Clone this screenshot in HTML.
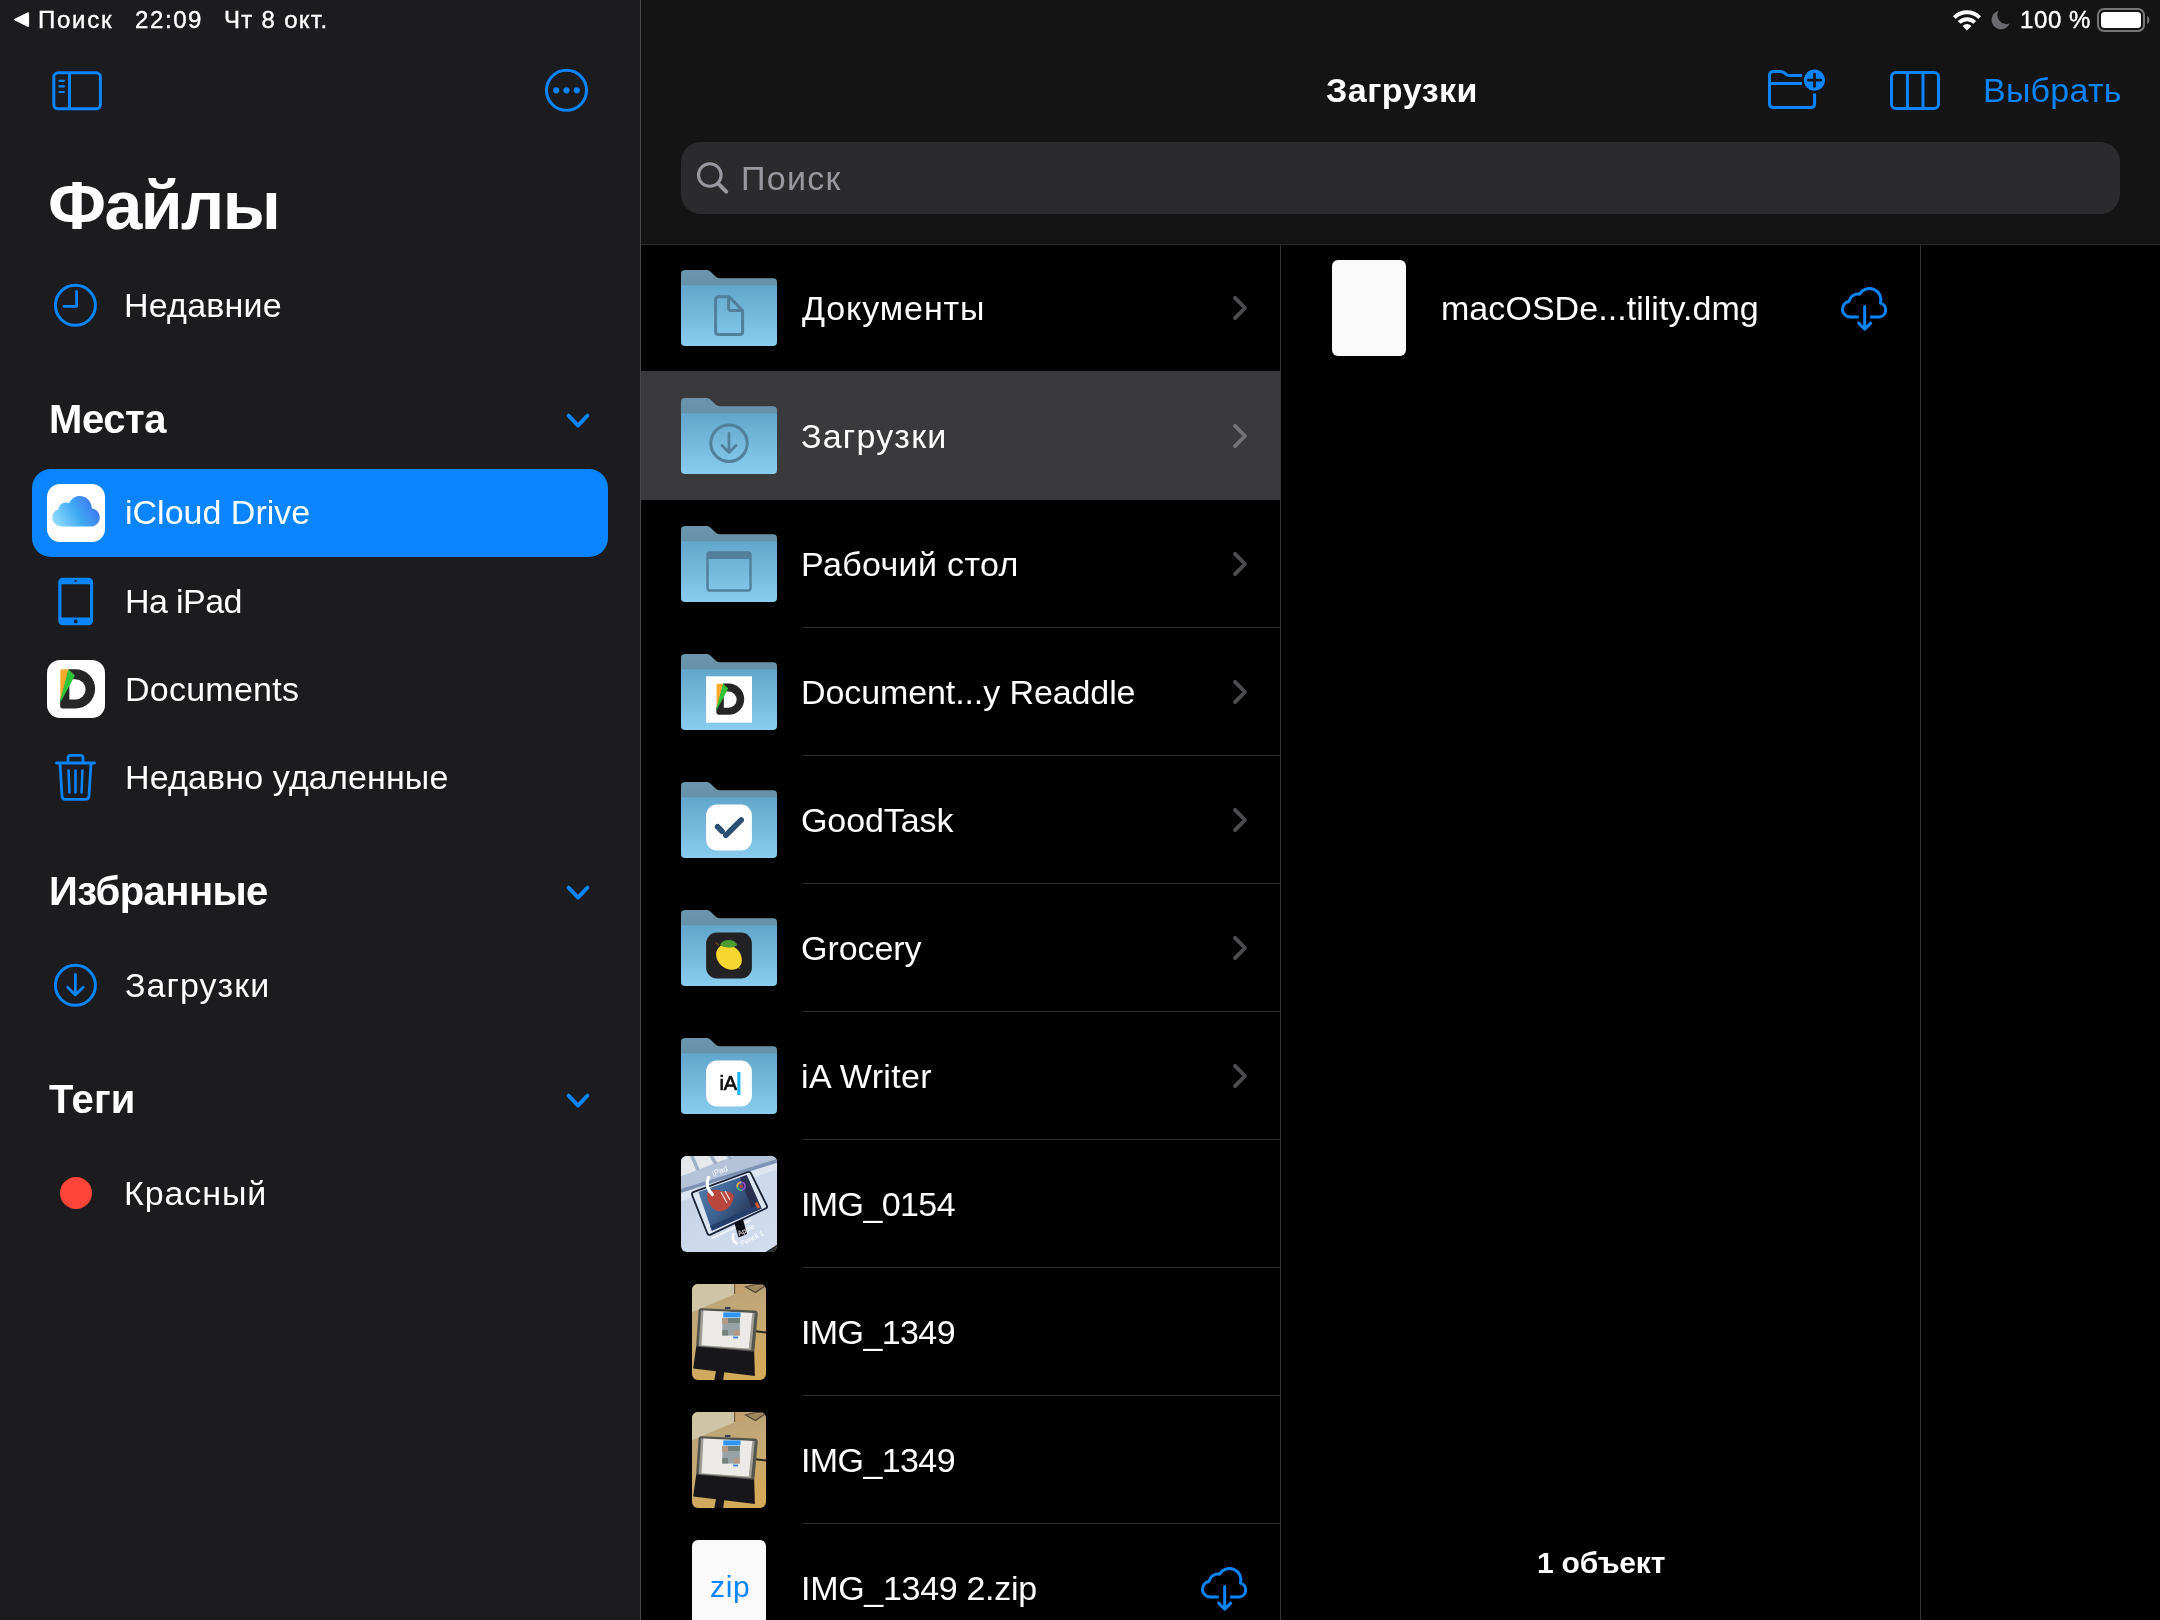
<!DOCTYPE html>
<html lang="ru">
<head>
<meta charset="utf-8">
<title>Файлы</title>
<style>
html,body{margin:0;padding:0;background:#000;}
body{width:2160px;height:1620px;position:relative;overflow:hidden;font-family:"Liberation Sans",sans-serif;}
.abs,.t,svg.i{position:absolute;}
svg.i{will-change:transform;}
.t{line-height:1em;white-space:pre;will-change:transform;}
.sidebar{left:0;top:0;width:640px;height:1620px;background:#1c1c1e;}
.sbline{left:640px;top:0;width:1px;height:1620px;background:#48484a;}
.nav{left:641px;top:0;width:1519px;height:244px;background:#141414;}
.navline{left:641px;top:244px;width:1519px;height:1px;background:#2a2a2b;}
.col{top:245px;width:1px;height:1375px;background:#333336;}
.sel{left:641px;top:371px;width:639px;height:129px;background:#3a3a3c;}
.sep{left:803px;width:477px;height:1px;background:#2f2f31;}
.search{left:681px;top:142px;width:1439px;height:72px;border-radius:20px;background:#2b2b2d;}
.pill{left:32px;top:469px;width:576px;height:88px;border-radius:19px;background:#0a84ff;}
.appic{width:58px;height:58px;border-radius:13px;background:#fff;overflow:hidden;}
.doc{width:74px;height:96px;border-radius:6px;background:#fafafa;}
</style>
</head>
<body>
<svg width="0" height="0" style="position:absolute"><defs>
<linearGradient id="fg" x1="0" y1="0" x2="0" y2="1"><stop offset="0" stop-color="#62a7cb"/><stop offset="1" stop-color="#88cdee"/></linearGradient>
<linearGradient id="fb" x1="0" y1="0" x2="0" y2="1"><stop offset="0" stop-color="#6b95ab"/><stop offset="1" stop-color="#638ea6"/></linearGradient>
<linearGradient id="cl" x1="0.05" y1="0.75" x2="1" y2="0.4"><stop offset="0" stop-color="#8ad8fa"/><stop offset="0.5" stop-color="#3ea9f5"/><stop offset="1" stop-color="#3f74ec"/></linearGradient>
</defs></svg>
<div class="abs sidebar"></div>
<div class="abs sbline"></div>
<div class="abs nav"></div>
<div class="abs navline"></div>
<div class="abs col" style="left:1280px"></div>
<div class="abs col" style="left:1920px"></div>
<div class="abs sel"></div>
<div class="abs sep" style="top:627px"></div>
<div class="abs sep" style="top:755px"></div>
<div class="abs sep" style="top:883px"></div>
<div class="abs sep" style="top:1011px"></div>
<div class="abs sep" style="top:1139px"></div>
<div class="abs sep" style="top:1267px"></div>
<div class="abs sep" style="top:1395px"></div>
<div class="abs sep" style="top:1523px"></div>
<div class="abs search"></div>
<div class="abs pill"></div>
<svg class="i" style="left:12px;top:10px" width="20" height="20" viewBox="0 0 20 20"><path d="M2.2 9.6 L15.8 2.8 Q16.6 2.4 16.6 3.3 V15.9 Q16.6 16.8 15.8 16.4 Z" fill="#fff" stroke="#fff" stroke-width="1" stroke-linejoin="round"/></svg>
<div class="t" style="left:37.5px;top:8px;font-size:24px;color:#fff;letter-spacing:1.75px;-webkit-text-stroke:0.4px #fff;">Поиск</div>
<div class="t" style="left:134.5px;top:8px;font-size:24px;color:#fff;letter-spacing:1.6px;-webkit-text-stroke:0.4px #fff;">22:09</div>
<div class="t" style="left:224.0px;top:8px;font-size:24px;color:#fff;letter-spacing:1.3px;-webkit-text-stroke:0.4px #fff;">Чт 8 окт.</div>
<div class="t" style="left:2020.0px;top:8px;font-size:24px;color:#fff;letter-spacing:0.6px;-webkit-text-stroke:0.4px #fff;">100 %</div>
<svg class="i" style="left:1951px;top:8px" width="32" height="24" viewBox="0 0 32 24">
<g fill="none" stroke="#fff" stroke-width="4" stroke-linecap="butt">
<path d="M3.4 9.6 A17.8 17.8 0 0 1 28.6 9.6"/>
<path d="M8.2 14.4 A11 11 0 0 1 23.8 14.4"/>
</g>
<path d="M16 22.4 L11.6 17.9 A6.2 6.2 0 0 1 20.4 17.9 Z" fill="#fff"/>
</svg>
<svg class="i" style="left:1989px;top:8px" width="22" height="24" viewBox="0 0 22 24">
<path d="M9.6 2.8 A9.4 9.4 0 1 0 20.6 15.6 A9 9 0 0 1 9.6 2.8 Z" fill="#6a6a6e"/>
</svg>
<svg class="i" style="left:2096px;top:7px" width="56" height="28" viewBox="0 0 56 28">
<rect x="2" y="2" width="46" height="22" rx="6" fill="none" stroke="#77777a" stroke-width="2"/>
<rect x="5" y="5" width="40" height="16" rx="3.5" fill="#fff"/>
<path d="M51.2 9 C54 10 54 16 51.2 17 Z" fill="#77777a"/>
</svg>
<svg class="i" style="left:50px;top:69px" width="56" height="44" viewBox="0 0 56 44">
<g fill="none" stroke="#0a84ff" stroke-width="3" stroke-linecap="round">
<rect x="3.8" y="3.8" width="46.6" height="36" rx="4.2"/>
<path d="M19.5 4 V39.5" stroke-linecap="butt"/>
<path d="M9.4 11.8 H13.9 M9.4 17.4 H13.9 M9.4 23 H13.9" stroke-width="2.2"/>
</g></svg>
<svg class="i" style="left:542px;top:66px" width="48" height="48" viewBox="0 0 48 48">
<circle cx="24.5" cy="24.3" r="20" fill="none" stroke="#0a84ff" stroke-width="3"/>
<circle cx="14.2" cy="24.3" r="3.1" fill="#0a84ff"/><circle cx="24.5" cy="24.3" r="3.1" fill="#0a84ff"/><circle cx="34.8" cy="24.3" r="3.1" fill="#0a84ff"/>
</svg>
<div class="t" style="left:48.0px;top:171px;font-size:68px;color:#fff;font-weight:700;letter-spacing:-1.55px;">Файлы</div>
<svg class="i" style="left:51px;top:281px" width="48" height="48" viewBox="0 0 48 48">
<circle cx="24.4" cy="24.3" r="20" fill="none" stroke="#0a84ff" stroke-width="3"/>
<path d="M25.6 10.5 V25.3 H13" fill="none" stroke="#0a84ff" stroke-width="2.8" stroke-linecap="round" stroke-linejoin="round"/>
</svg>
<div class="t" style="left:124.0px;top:288px;font-size:34px;color:#fff;letter-spacing:0.2px;">Недавние</div>
<div class="t" style="left:49.0px;top:399px;font-size:40px;color:#fff;font-weight:700;letter-spacing:-0.4px;">Места</div>
<svg class="i" style="left:562px;top:409px" width="32" height="24" viewBox="0 0 32 24">
<path d="M6.6 6.6 L16 16.6 L25.4 6.6" fill="none" stroke="#0a84ff" stroke-width="3.8" stroke-linecap="round" stroke-linejoin="round"/></svg>
<div class="t" style="left:49.0px;top:871px;font-size:40px;color:#fff;font-weight:700;letter-spacing:-0.55px;">Избранные</div>
<svg class="i" style="left:562px;top:881px" width="32" height="24" viewBox="0 0 32 24">
<path d="M6.6 6.6 L16 16.6 L25.4 6.6" fill="none" stroke="#0a84ff" stroke-width="3.8" stroke-linecap="round" stroke-linejoin="round"/></svg>
<div class="t" style="left:48.5px;top:1079px;font-size:40px;color:#fff;font-weight:700;letter-spacing:0.15px;">Теги</div>
<svg class="i" style="left:562px;top:1089px" width="32" height="24" viewBox="0 0 32 24">
<path d="M6.6 6.6 L16 16.6 L25.4 6.6" fill="none" stroke="#0a84ff" stroke-width="3.8" stroke-linecap="round" stroke-linejoin="round"/></svg>
<div class="abs appic" style="left:47px;top:484px"><svg width="58" height="58" viewBox="0 0 58 58">
<path d="M15.5 42.5 C9.5 42.5 5.3 38.6 5.3 33.6 C5.3 29.6 7.9 26.6 11.4 25.6 C11.8 21.4 14.9 18.4 18.8 18.4 C20 18.4 21.2 18.7 22.2 19.3 C24.3 14.8 28.2 12.1 32.8 12.1 C39.4 12.1 44.5 17.3 44.8 24.2 C49.6 25.2 52.8 29 52.8 33.4 C52.8 38.5 48.8 42.5 43.4 42.5 Z" fill="url(#cl)"/>
</svg></div>
<div class="t" style="left:124.5px;top:495px;font-size:34px;color:#fff;">iCloud Drive</div>
<svg class="i" style="left:56px;top:576px" width="40" height="52" viewBox="0 0 40 52">
<rect x="2.3" y="1.8" width="34.8" height="47.4" rx="4.5" fill="#0a84ff"/>
<rect x="5.4" y="8.2" width="28.6" height="33.4" rx="0.8" fill="#1c1c1e"/>
<circle cx="19.7" cy="5" r="1.1" fill="#1c1c1e"/>
<circle cx="19.7" cy="45.4" r="1.9" fill="#1c1c1e"/>
</svg>
<div class="t" style="left:124.5px;top:584px;font-size:34px;color:#fff;letter-spacing:-0.6px;">На iPad</div>
<div class="abs appic" style="left:47px;top:660px"><svg width="58" height="58" viewBox="0 0 58 58"><g>
<path d="M21.6 9.2 H28.5 A19.6 19.6 0 0 1 28.5 48.4 H15.8 Q13.1 48.4 13.1 45.7 V40 Z" fill="#262626"/>
<path d="M22.4 19.2 H28.4 A10.2 10.2 0 0 1 28.4 39.6 H22.4 Z" fill="#fff"/>
<path d="M13.3 10.8 Q13.3 9.3 14.8 9.3 H21.5 L17 28 L13.3 40 Z" fill="#fda92b"/>
<path d="M21.5 9.3 L27.9 15.4 L22.4 26 L13.3 42.6 L13.3 40 Z" fill="#2fc43a"/>
</g></svg></div>
<div class="t" style="left:124.5px;top:672px;font-size:34px;color:#fff;letter-spacing:0.25px;">Documents</div>
<svg class="i" style="left:52px;top:752px" width="48" height="52" viewBox="0 0 48 52">
<g fill="none" stroke="#0a84ff" stroke-width="2.8" stroke-linecap="round" stroke-linejoin="round">
<path d="M4.5 11 H42.5"/>
<path d="M16 10.5 V6 C16 4.4 17.1 3.4 18.6 3.4 H28.4 C29.9 3.4 31 4.4 31 6 V10.5"/>
<path d="M8 11.5 L10 44 C10.1 46 11.4 47.4 13.4 47.4 H33.6 C35.6 47.4 36.9 46 37 44 L39 11.5"/>
<path d="M16.6 18.5 L17.4 40.5 M23.5 18.5 V40.5 M30.4 18.5 L29.6 40.5" stroke-width="2.5"/>
</g></svg>
<div class="t" style="left:124.5px;top:760px;font-size:34px;color:#fff;letter-spacing:0.15px;">Недавно удаленные</div>
<svg class="i" style="left:51px;top:961px" width="48" height="48" viewBox="0 0 48 48">
<circle cx="24.4" cy="24.3" r="20" fill="none" stroke="#0a84ff" stroke-width="3"/>
<path d="M24.4 13.5 V33.5 M16.6 26.3 L24.4 34 L32.2 26.3" fill="none" stroke="#0a84ff" stroke-width="2.8" stroke-linecap="round" stroke-linejoin="round"/>
</svg>
<div class="t" style="left:124.5px;top:968px;font-size:34px;color:#fff;letter-spacing:1.05px;">Загрузки</div>
<div class="abs" style="left:60px;top:1177px;width:32px;height:32px;border-radius:50%;background:#ff453a"></div>
<div class="t" style="left:123.5px;top:1176px;font-size:34px;color:#fff;letter-spacing:0.9px;">Красный</div>
<div class="t" style="left:1326.0px;top:73px;font-size:34px;color:#fff;font-weight:700;letter-spacing:0.5px;">Загрузки</div>
<div class="t" style="left:1982.5px;top:73px;font-size:34px;color:#0a84ff;letter-spacing:0.25px;">Выбрать</div>
<div class="t" style="left:741.0px;top:161px;font-size:34px;color:#98989f;letter-spacing:1.3px;">Поиск</div>
<svg class="i" style="left:693px;top:158px" width="40" height="40" viewBox="0 0 40 40">
<circle cx="16.8" cy="17" r="11.3" fill="none" stroke="#98989f" stroke-width="3.1"/>
<path d="M25.2 25.6 L33.2 33.6" stroke="#98989f" stroke-width="4" stroke-linecap="round"/>
</svg>
<svg class="i" style="left:1764px;top:64px" width="68" height="52" viewBox="0 0 68 52">
<g fill="none" stroke="#0a84ff" stroke-width="3" stroke-linejoin="round" stroke-linecap="butt">
<path d="M38 11.5 H25.5 C23.6 11.5 22.6 11 21.6 10 L20 8.6 C18.9 7.7 18 7.4 16.2 7.4 H9.5 C7 7.4 5.5 8.9 5.5 11.4 V39.6 C5.5 42.1 7 43.6 9.5 43.6 H46.6 C49.1 43.6 50.6 42.1 50.6 39.6 V29.5"/>
<path d="M5.5 19.5 H38"/>
</g>
<circle cx="50.5" cy="16.2" r="10.6" fill="#0a84ff"/>
<path d="M44.3 16.2 H56.7 M50.5 10 V22.4" stroke="#141414" stroke-width="2.7" stroke-linecap="round"/>
</svg>
<svg class="i" style="left:1886px;top:66px" width="60" height="48" viewBox="0 0 60 48">
<g fill="none" stroke="#0a84ff" stroke-width="3">
<rect x="5.5" y="6.5" width="47" height="36" rx="4.2"/>
<path d="M21.4 6.5 V42.5 M37 6.5 V42.5"/>
</g></svg>
<div class="t" style="left:801.5px;top:291px;font-size:34px;color:#fff;letter-spacing:0.9px;">Документы</div>
<svg class="i" style="left:681px;top:270px" width="96" height="76" viewBox="0 0 96 76">
<path d="M0 4 Q0 0 4 0 H25.5 Q28 0 30 2 L34.5 6.5 Q36.2 8.2 39 8.2 H92 Q96 8.2 96 12.2 V30 H0 Z" fill="url(#fb)"/>
<path d="M0 16.5 Q0 15.2 1.3 15.2 H94.7 Q96 15.2 96 16.5 V72 Q96 76 92 76 H4 Q0 76 0 72 Z" fill="url(#fg)"/>
<path d="M37.6 26.7 H48.2 L61.6 40.6 V61.4 Q61.6 64.4 58.6 64.4 H37.6 Q34.6 64.4 34.6 61.4 V29.7 Q34.6 26.7 37.6 26.7 Z M47.6 27 V38 Q47.6 40.6 50.2 40.6 H61.2" fill="none" stroke="#527f9b" stroke-width="3" stroke-linejoin="round"/></svg>
<svg class="i" style="left:1228px;top:292px" width="24" height="32" viewBox="0 0 24 32">
<path d="M7 5.8 L17 16 L7 26.2" fill="none" stroke="rgb(235,235,245)" stroke-opacity="0.32" stroke-width="3.9" stroke-linecap="round" stroke-linejoin="round"/></svg>
<div class="t" style="left:801.0px;top:419px;font-size:34px;color:#fff;letter-spacing:1.2px;">Загрузки</div>
<svg class="i" style="left:681px;top:398px" width="96" height="76" viewBox="0 0 96 76">
<path d="M0 4 Q0 0 4 0 H25.5 Q28 0 30 2 L34.5 6.5 Q36.2 8.2 39 8.2 H92 Q96 8.2 96 12.2 V30 H0 Z" fill="url(#fb)"/>
<path d="M0 16.5 Q0 15.2 1.3 15.2 H94.7 Q96 15.2 96 16.5 V72 Q96 76 92 76 H4 Q0 76 0 72 Z" fill="url(#fg)"/>
<circle cx="48" cy="45.2" r="18.2" fill="none" stroke="#527f9b" stroke-width="3"/><path d="M48 35.5 V54 M41 47.5 L48 54.5 L55 47.5" fill="none" stroke="#527f9b" stroke-width="2.8" stroke-linecap="round" stroke-linejoin="round"/></svg>
<svg class="i" style="left:1228px;top:420px" width="24" height="32" viewBox="0 0 24 32">
<path d="M7 5.8 L17 16 L7 26.2" fill="none" stroke="rgb(235,235,245)" stroke-opacity="0.32" stroke-width="3.9" stroke-linecap="round" stroke-linejoin="round"/></svg>
<div class="t" style="left:800.5px;top:547px;font-size:34px;color:#fff;letter-spacing:0.35px;">Рабочий стол</div>
<svg class="i" style="left:681px;top:526px" width="96" height="76" viewBox="0 0 96 76">
<path d="M0 4 Q0 0 4 0 H25.5 Q28 0 30 2 L34.5 6.5 Q36.2 8.2 39 8.2 H92 Q96 8.2 96 12.2 V30 H0 Z" fill="url(#fb)"/>
<path d="M0 16.5 Q0 15.2 1.3 15.2 H94.7 Q96 15.2 96 16.5 V72 Q96 76 92 76 H4 Q0 76 0 72 Z" fill="url(#fg)"/>
<rect x="26.5" y="26.5" width="43" height="38" rx="2.5" fill="none" stroke="#527f9b" stroke-width="2.4"/><rect x="26.5" y="26.5" width="43" height="6.5" fill="#527f9b"/></svg>
<svg class="i" style="left:1228px;top:548px" width="24" height="32" viewBox="0 0 24 32">
<path d="M7 5.8 L17 16 L7 26.2" fill="none" stroke="rgb(235,235,245)" stroke-opacity="0.32" stroke-width="3.9" stroke-linecap="round" stroke-linejoin="round"/></svg>
<div class="t" style="left:801.0px;top:675px;font-size:34px;color:#fff;letter-spacing:-0.1px;">Document...y Readdle</div>
<svg class="i" style="left:681px;top:654px" width="96" height="76" viewBox="0 0 96 76">
<path d="M0 4 Q0 0 4 0 H25.5 Q28 0 30 2 L34.5 6.5 Q36.2 8.2 39 8.2 H92 Q96 8.2 96 12.2 V30 H0 Z" fill="url(#fb)"/>
<path d="M0 16.5 Q0 15.2 1.3 15.2 H94.7 Q96 15.2 96 16.5 V72 Q96 76 92 76 H4 Q0 76 0 72 Z" fill="url(#fg)"/>
<rect x="25.1" y="22.3" width="45.9" height="46.4" fill="#fff"/><g transform="translate(25,22.3) scale(0.794)"><g>
<path d="M21.6 9.2 H28.5 A19.6 19.6 0 0 1 28.5 48.4 H15.8 Q13.1 48.4 13.1 45.7 V40 Z" fill="#262626"/>
<path d="M22.4 19.2 H28.4 A10.2 10.2 0 0 1 28.4 39.6 H22.4 Z" fill="#fff"/>
<path d="M13.3 10.8 Q13.3 9.3 14.8 9.3 H21.5 L17 28 L13.3 40 Z" fill="#fda92b"/>
<path d="M21.5 9.3 L27.9 15.4 L22.4 26 L13.3 42.6 L13.3 40 Z" fill="#2fc43a"/>
</g></g></svg>
<svg class="i" style="left:1228px;top:676px" width="24" height="32" viewBox="0 0 24 32">
<path d="M7 5.8 L17 16 L7 26.2" fill="none" stroke="rgb(235,235,245)" stroke-opacity="0.32" stroke-width="3.9" stroke-linecap="round" stroke-linejoin="round"/></svg>
<div class="t" style="left:801.0px;top:803px;font-size:34px;color:#fff;letter-spacing:-0.1px;">GoodTask</div>
<svg class="i" style="left:681px;top:782px" width="96" height="76" viewBox="0 0 96 76">
<path d="M0 4 Q0 0 4 0 H25.5 Q28 0 30 2 L34.5 6.5 Q36.2 8.2 39 8.2 H92 Q96 8.2 96 12.2 V30 H0 Z" fill="url(#fb)"/>
<path d="M0 16.5 Q0 15.2 1.3 15.2 H94.7 Q96 15.2 96 16.5 V72 Q96 76 92 76 H4 Q0 76 0 72 Z" fill="url(#fg)"/>
<rect x="25.1" y="22.5" width="45.8" height="46" rx="11" fill="#fff"/><path d="M36.6 44.8 L41 49.2 M60.2 38 L44.9 53.3" fill="none" stroke="#2a4f74" stroke-width="5.6" stroke-linecap="round"/></svg>
<svg class="i" style="left:1228px;top:804px" width="24" height="32" viewBox="0 0 24 32">
<path d="M7 5.8 L17 16 L7 26.2" fill="none" stroke="rgb(235,235,245)" stroke-opacity="0.32" stroke-width="3.9" stroke-linecap="round" stroke-linejoin="round"/></svg>
<div class="t" style="left:801.0px;top:931px;font-size:34px;color:#fff;letter-spacing:-0.05px;">Grocery</div>
<svg class="i" style="left:681px;top:910px" width="96" height="76" viewBox="0 0 96 76">
<path d="M0 4 Q0 0 4 0 H25.5 Q28 0 30 2 L34.5 6.5 Q36.2 8.2 39 8.2 H92 Q96 8.2 96 12.2 V30 H0 Z" fill="url(#fb)"/>
<path d="M0 16.5 Q0 15.2 1.3 15.2 H94.7 Q96 15.2 96 16.5 V72 Q96 76 92 76 H4 Q0 76 0 72 Z" fill="url(#fg)"/>
<rect x="25.1" y="22.5" width="45.8" height="46" rx="11" fill="#222224"/><ellipse cx="48" cy="47.2" rx="14" ry="11.3" fill="#f7d72f" transform="rotate(42 48 47.2)"/><path d="M57.6 57 L59.5 58.5 L57 58.2 Z" fill="#f7d72f"/><path d="M39 35.2 Q41 30 48.5 30.1 Q54 30.5 56.5 35 Q52 38.2 47 37.6 Q42 37 39 35.2 Z" fill="#4b9b33"/><path d="M34.6 32.4 L37.8 35.4" stroke="#7a5a20" stroke-width="1.2"/></svg>
<svg class="i" style="left:1228px;top:932px" width="24" height="32" viewBox="0 0 24 32">
<path d="M7 5.8 L17 16 L7 26.2" fill="none" stroke="rgb(235,235,245)" stroke-opacity="0.32" stroke-width="3.9" stroke-linecap="round" stroke-linejoin="round"/></svg>
<div class="t" style="left:801.0px;top:1059px;font-size:34px;color:#fff;letter-spacing:0.35px;">iA Writer</div>
<svg class="i" style="left:681px;top:1038px" width="96" height="76" viewBox="0 0 96 76">
<path d="M0 4 Q0 0 4 0 H25.5 Q28 0 30 2 L34.5 6.5 Q36.2 8.2 39 8.2 H92 Q96 8.2 96 12.2 V30 H0 Z" fill="url(#fb)"/>
<path d="M0 16.5 Q0 15.2 1.3 15.2 H94.7 Q96 15.2 96 16.5 V72 Q96 76 92 76 H4 Q0 76 0 72 Z" fill="url(#fg)"/>
<rect x="25.1" y="22.5" width="45.8" height="46" rx="11" fill="#fff"/><text x="38.4" y="52.1" font-family="Liberation Sans, sans-serif" font-size="20" fill="#111" stroke="#111" stroke-width="0.7">iA</text><rect x="56.3" y="34" width="3.1" height="23" fill="#1ab4f7"/></svg>
<svg class="i" style="left:1228px;top:1060px" width="24" height="32" viewBox="0 0 24 32">
<path d="M7 5.8 L17 16 L7 26.2" fill="none" stroke="rgb(235,235,245)" stroke-opacity="0.32" stroke-width="3.9" stroke-linecap="round" stroke-linejoin="round"/></svg>
<div class="t" style="left:801.0px;top:1187px;font-size:34px;color:#fff;letter-spacing:-0.6px;">IMG_0154</div>
<div class="t" style="left:801.0px;top:1315px;font-size:34px;color:#fff;letter-spacing:-0.6px;">IMG_1349</div>
<div class="t" style="left:801.0px;top:1443px;font-size:34px;color:#fff;letter-spacing:-0.6px;">IMG_1349</div>
<div class="t" style="left:801.0px;top:1571px;font-size:34px;color:#fff;letter-spacing:-0.3px;">IMG_1349 2.zip</div>
<svg class="i" style="left:681px;top:1156px" width="96" height="96" viewBox="0 0 96 96">
<defs><clipPath id="c1"><rect width="96" height="96" rx="6"/></clipPath>
<linearGradient id="p1" x1="0" y1="0" x2="1" y2="1"><stop offset="0" stop-color="#c2cfe3"/><stop offset="0.5" stop-color="#cbd8eb"/><stop offset="1" stop-color="#d2deef"/></linearGradient>
<linearGradient id="p1s" x1="0" y1="0" x2="1" y2="0.6"><stop offset="0" stop-color="#5580ab"/><stop offset="0.5" stop-color="#3d6394"/><stop offset="1" stop-color="#27304c"/></linearGradient></defs>
<g clip-path="url(#c1)">
<rect width="96" height="96" fill="url(#p1)"/>
<g>
<path d="M-2 -2 H98 V6 L-2 37 Z" fill="#b4c3d9"/>
<path d="M-2 -2 H58 L-2 21 Z" fill="#e6e9ec"/>
<path d="M10 -2 L17 14 M29 -2 L35 8 M46 -2 L50 3" stroke="#9fb0c8" stroke-width="3.5"/>
<path d="M-2 33.5 L98 2.5 V6 L-2 37.5 Z" fill="#7e93b4"/>
<path d="M-2 38 L98 6.5 V13 L-2 46 Z" fill="#dde5f0"/>
<path d="M12.2 36.2 L66.8 16 Q69 15.3 70 17.3 L85.8 49.5 Q86.8 51.6 84.6 52.5 L29.6 78.6 Q27.4 79.6 26.4 77.5 L11.2 39.3 Q10.3 37 12.2 36.2 Z" fill="#dbe4f1" stroke="#172236" stroke-width="1.8"/>
<path d="M17.5 36.1 L65.7 19.1 L80.5 52.4 L30.9 74.7 Z" fill="url(#p1s)"/>
<path d="M59 21.5 L65.7 19.1 L80.5 52.4 L72 56.2 Z" fill="#2a3150"/>
<path d="M26 37 Q33 31 41 35.5 Q50 34 53 40 Q52 48 46 53 Q40 57 34 54 Q26 49 26 37 Z" fill="#b8463c"/>
<path d="M40 36 L46 47 M44 35 L49 44" stroke="#f0d8d8" stroke-width="1.3"/>
<path d="M30.9 74.7 L80.5 52.4 L78.5 48 L29 70 Z" fill="#243f6e"/>
<circle cx="60.1" cy="30.2" r="4" fill="none" stroke="#a34fd8" stroke-width="1.6"/>
<path d="M56.3 31 A4 4 0 0 1 60 26.2" fill="none" stroke="#e6c030" stroke-width="1.6"/>
<path d="M56.3 31 A4 4 0 0 0 61 34.1" fill="none" stroke="#3fb868" stroke-width="1.6"/>
<circle cx="60.1" cy="30.2" r="1.8" fill="#b0474f"/>
<path d="M76.4 46 L79 51.6 L76.4 52.8 L73.8 47.2 Z" fill="#d85a30"/>
<path d="M30.5 82.5 L69.5 64.2" stroke="#f4f6fa" stroke-width="1.6"/>
<path d="M53.5 67.2 L62 63.4 L66 78 L57.5 81.6 Z" fill="#0b0b14"/>
<path d="M27.5 21.5 Q23.5 31 31.5 38.5" stroke="#fff" stroke-width="3.2" fill="none" stroke-linecap="round"/>
<path d="M52.5 78 Q50 84 55.5 87.5" stroke="#fff" stroke-width="2.6" fill="none" stroke-linecap="round"/>
<path d="M83 97 L97 88 V97 Z" fill="#2a2a2c"/>
</g>
<text x="32.5" y="20.5" font-family="Liberation Sans, sans-serif" font-size="8" fill="#fff" transform="rotate(-22 32.5 20.5)">iPad</text>
<text x="58" y="80" font-family="Liberation Sans, sans-serif" font-size="7" fill="#fff" transform="rotate(-27 58 80)">Apple</text>
<text x="61" y="90" font-family="Liberation Sans, sans-serif" font-size="7" fill="#fff" transform="rotate(-27 61 90)">Pencil 1</text>
</g></svg>
<svg class="i" style="left:692px;top:1284px" width="74" height="96" viewBox="0 0 74 96">
<defs><clipPath id="c2"><rect width="74" height="96" rx="6"/></clipPath>
<linearGradient id="c2f" x1="0" y1="0" x2="0.3" y2="1"><stop offset="0" stop-color="#b3a07a"/><stop offset="0.55" stop-color="#c6aa74"/><stop offset="1" stop-color="#d3a95a"/></linearGradient></defs>
<g clip-path="url(#c2)">
<rect width="74" height="96" fill="url(#c2f)"/>
<g>
<path d="M-2 -2 H43 V10 L-2 29 Z" fill="#d0c4a7"/>
<path d="M43 -2 H52.5 V9.5 H43 Z" fill="#c3a06d"/>
<path d="M42.6 -2 V10" stroke="#4a3f30" stroke-width="0.9"/>
<path d="M53.5 3 L63 0.5 H75 L63.5 8.5 Z" fill="#a0875e" stroke="#54473a" stroke-width="1.2"/>
<path d="M63.5 47.2 L74 48.6" stroke="#2a2622" stroke-width="2"/>
<path d="M6.5 27 Q6.6 24 9.6 24.2 L62.5 26.4 Q66 26.6 65.7 30 L62.3 68.5 L4 63.5 Z" fill="#55554f"/>
<path d="M9 26.6 L62.8 29 L59.2 66 L6.8 62 Z" fill="#9d9c95"/>
<path d="M11.5 26.6 L60.3 29 L56.8 64.5 L9.6 61.2 Z" fill="#eceae6"/>
<rect x="31.3" y="28.4" width="17.2" height="5" fill="#2b95f1"/>
<rect x="30.3" y="34" width="17.6" height="17.6" fill="#97a3a5"/>
<path d="M30.3 34 H36 V40 H30.3 Z M42 46 H47.9 V51.6 H42 Z" fill="#b49a86"/>
<path d="M36 34 H47.9 V39 H36 Z M30.3 46 H36 V51.6 H30.3 Z" fill="#74807a"/>
<rect x="41" y="52.4" width="5.2" height="2" rx="0.6" fill="#3b8ff0"/>
<path d="M33 23 H38.5 V25 H33 Z" fill="#33405a"/>
<path d="M4.2 62.6 L62.2 67.8 L62.9 92 L1.2 84.4 Z" fill="#17171b"/>
<path d="M24.3 85 H32.6 L31 98 H22 Z" fill="#15151a"/>
</g>
</g></svg>
<svg class="i" style="left:692px;top:1412px" width="74" height="96" viewBox="0 0 74 96">
<defs><clipPath id="c3"><rect width="74" height="96" rx="6"/></clipPath>
<linearGradient id="c3f" x1="0" y1="0" x2="0.3" y2="1"><stop offset="0" stop-color="#b3a07a"/><stop offset="0.55" stop-color="#c6aa74"/><stop offset="1" stop-color="#d3a95a"/></linearGradient></defs>
<g clip-path="url(#c3)">
<rect width="74" height="96" fill="url(#c3f)"/>
<g>
<path d="M-2 -2 H43 V10 L-2 29 Z" fill="#d0c4a7"/>
<path d="M43 -2 H52.5 V9.5 H43 Z" fill="#c3a06d"/>
<path d="M42.6 -2 V10" stroke="#4a3f30" stroke-width="0.9"/>
<path d="M53.5 3 L63 0.5 H75 L63.5 8.5 Z" fill="#a0875e" stroke="#54473a" stroke-width="1.2"/>
<path d="M63.5 47.2 L74 48.6" stroke="#2a2622" stroke-width="2"/>
<path d="M6.5 27 Q6.6 24 9.6 24.2 L62.5 26.4 Q66 26.6 65.7 30 L62.3 68.5 L4 63.5 Z" fill="#55554f"/>
<path d="M9 26.6 L62.8 29 L59.2 66 L6.8 62 Z" fill="#9d9c95"/>
<path d="M11.5 26.6 L60.3 29 L56.8 64.5 L9.6 61.2 Z" fill="#eceae6"/>
<rect x="31.3" y="28.4" width="17.2" height="5" fill="#2b95f1"/>
<rect x="30.3" y="34" width="17.6" height="17.6" fill="#97a3a5"/>
<path d="M30.3 34 H36 V40 H30.3 Z M42 46 H47.9 V51.6 H42 Z" fill="#b49a86"/>
<path d="M36 34 H47.9 V39 H36 Z M30.3 46 H36 V51.6 H30.3 Z" fill="#74807a"/>
<rect x="41" y="52.4" width="5.2" height="2" rx="0.6" fill="#3b8ff0"/>
<path d="M33 23 H38.5 V25 H33 Z" fill="#33405a"/>
<path d="M4.2 62.6 L62.2 67.8 L62.9 92 L1.2 84.4 Z" fill="#17171b"/>
<path d="M24.3 85 H32.6 L31 98 H22 Z" fill="#15151a"/>
</g>
</g></svg>
<div class="abs doc" style="left:692px;top:1540px"></div>
<div class="t" style="left:710.0px;top:1572px;font-size:30px;color:#0a84ff;letter-spacing:0.65px;">zip</div>
<svg class="i" style="left:1196px;top:1563px" width="56" height="52" viewBox="0 0 56 52">
<g fill="none" stroke="#0a84ff" stroke-width="3" stroke-linecap="round" stroke-linejoin="round">
<path d="M22.8 33.9 H13.9 A7.7 7.7 0 0 1 12.9 18.6 A9.2 9.2 0 0 1 23.5 11.2 A11.5 11.5 0 0 1 44.5 20.1 A7.1 7.1 0 0 1 44 33.9 H34.2" stroke-linecap="butt"/>
<path d="M28.7 23.6 V45.6 M22.7 40.1 L28.7 46.2 L34.7 40.1"/>
</g></svg>
<div class="abs doc" style="left:1332px;top:260px"></div>
<div class="t" style="left:1441.0px;top:291px;font-size:34px;color:#fff;letter-spacing:0.05px;">macOSDe...tility.dmg</div>
<svg class="i" style="left:1836px;top:283px" width="56" height="52" viewBox="0 0 56 52">
<g fill="none" stroke="#0a84ff" stroke-width="3" stroke-linecap="round" stroke-linejoin="round">
<path d="M22.8 33.9 H13.9 A7.7 7.7 0 0 1 12.9 18.6 A9.2 9.2 0 0 1 23.5 11.2 A11.5 11.5 0 0 1 44.5 20.1 A7.1 7.1 0 0 1 44 33.9 H34.2" stroke-linecap="butt"/>
<path d="M28.7 23.6 V45.6 M22.7 40.1 L28.7 46.2 L34.7 40.1"/>
</g></svg>
<div class="t" style="left:1536.5px;top:1548px;font-size:30px;color:#fff;font-weight:700;letter-spacing:-0.2px;">1 объект</div>
</body>
</html>
